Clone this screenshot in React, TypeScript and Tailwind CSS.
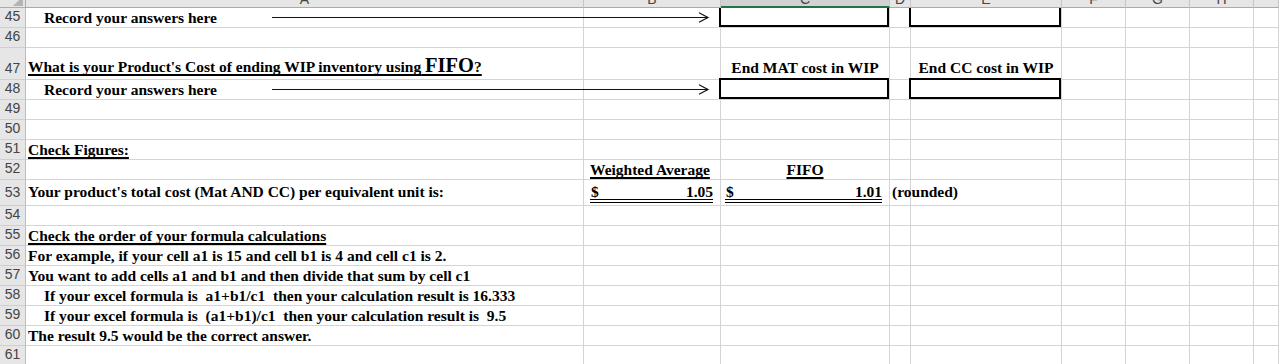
import React from "react";

type Cell = { c?: React.ReactNode; cls?: string; box?: "full" | "open" };

const W = [
  "w-[26px]",
  "w-[558px]",
  "w-[137px]",
  "w-[169px]",
  "w-[21px]",
  "w-[151px]",
  "w-[64px]",
  "w-[64px]",
  "w-[64px]",
  "w-[25px]",
];

const U =
  "underline decoration-2 underline-offset-[2px] [text-decoration-skip-ink:none]";

function Arrow() {
  return (
    <svg
      className="absolute left-[270px] top-0"
      width="442"
      height="20"
      viewBox="0 0 442 20"
    >
      <line x1="2" y1="9.5" x2="438" y2="9.5" stroke="#111" strokeWidth="1.2" />
      <polyline
        points="429,4.8 438,9.5 429,14.2"
        fill="none"
        stroke="#111"
        strokeWidth="1.2"
      />
    </svg>
  );
}

function Row({
  n,
  h,
  numPb = "pb-[3px]",
  cells = [],
  arrow = false,
}: {
  n: number;
  h: string;
  numPb?: string;
  cells?: Cell[];
  arrow?: boolean;
}) {
  const all: Cell[] = Array.from({ length: 9 }, (_, i) => cells[i] ?? {});
  return (
    <div className={`relative flex ${h}`}>
      <div
        className={`${W[0]} shrink-0 flex items-end justify-center bg-[#e6e6e6] border-r border-b border-r-[#bdbdbd] border-b-[#cfcfcf] ${numPb} font-['Liberation_Sans',sans-serif] font-normal text-[14px] leading-[16px] text-[#444]`}
      >
        {n}
      </div>
      {all.map((cell, i) => (
        <div
          key={i}
          className={`${W[i + 1]} shrink-0 relative flex items-end whitespace-pre border-r border-b border-[#d4d4d4] ${cell.cls ?? ""}`}
        >
          {cell.c}
          {cell.box === "full" && (
            <div className="absolute -left-[2px] right-0 -top-[2px] bottom-0 border-2 border-black" />
          )}
          {cell.box === "open" && (
            <div className="absolute -left-[2px] right-0 top-0 bottom-0 border-l-2 border-r-2 border-b-2 border-black" />
          )}
        </div>
      ))}
      {arrow && <Arrow />}
    </div>
  );
}

function DoubleAmount({ v, cls }: { v: string; cls: string }) {
  return (
    <div className={`flex w-full flex-col pb-[2px] ${cls}`}>
      <div className="flex justify-between leading-[14px]">
        <span className="pl-[1px]">$</span>
        <span>{v}</span>
      </div>
      <div className="h-[4px] border-y border-black" />
    </div>
  );
}

const letters = ["A", "B", "C", "D", "E", "F", "G", "H", ""];

export default function App() {
  return (
    <div className="w-[1279px] h-[364px] overflow-hidden bg-white font-['Liberation_Serif',serif] font-bold text-[15.5px] leading-[18px] text-black">
      {/* column header */}
      <div className="flex h-[8px]">
        <div className={`${W[0]} shrink-0 relative overflow-hidden bg-[#e6e6e6] border-r border-b border-[#ababab]`}>
          <svg className="absolute left-0 top-0" width="25" height="7" viewBox="0 0 25 7">
            <polygon points="23,-4 23,6 13,6" fill="#b4b4b4" />
          </svg>
        </div>
        {letters.map((l, i) => (
          <div
            key={i}
            className={`${W[i + 1]} shrink-0 flex justify-center items-end overflow-hidden border-r border-r-[#c6c6c6] ${
              l === "C"
                ? "bg-[#d2d2d2] border-b-2 border-b-[#217346]"
                : "bg-[#e6e6e6] border-b border-b-[#ababab]"
            }`}
          >
            <span
              className={`font-['Liberation_Sans',sans-serif] font-normal text-[14px] leading-[14px] text-[#444] ${
                l === "C" ? "" : "mb-[1px]"
              }`}
            >
              {l}
            </span>
          </div>
        ))}
      </div>

      <Row
        n={45}
        h="h-[20px]"
        arrow
        cells={[
          { c: "Record your answers here", cls: "pl-[18px]" },
          {},
          { box: "open" },
          {},
          { box: "open" },
        ]}
      />
      <Row n={46} h="h-[20px]" />
      <Row
        n={47}
        h="h-[32px]"
        cells={[
          {
            c: (
              <span className={U}>
                What is your Product's Cost of ending WIP inventory using{" "}
                <span className="text-[20.5px]">FIFO</span>?
              </span>
            ),
            cls: "pl-[2px] pb-[3px]",
          },
          {},
          { c: "End MAT cost in WIP", cls: "justify-center pb-[2px]" },
          {},
          { c: "End CC cost in WIP", cls: "justify-center pb-[2px]" },
        ]}
      />
      <Row
        n={48}
        h="h-[20px]"
        arrow
        cells={[
          { c: "Record your answers here", cls: "pl-[18px]" },
          {},
          { box: "full" },
          {},
          { box: "full" },
        ]}
      />
      <Row n={49} h="h-[20px]" />
      <Row n={50} h="h-[20px]" />
      <Row
        n={51}
        h="h-[20px]"
        cells={[{ c: <span className={U}>Check Figures:</span>, cls: "pl-[2px]" }]}
      />
      <Row
        n={52}
        h="h-[20px]"
        cells={[
          {},
          { c: <span className={U}>Weighted Average</span>, cls: "pl-[6px]" },
          { c: <span className={U}>FIFO</span>, cls: "justify-center" },
        ]}
      />
      <Row
        n={53}
        h="h-[26px]"
        numPb="pb-[5px]"
        cells={[
          {
            c: "Your product's total cost (Mat AND CC) per equivalent unit is:",
            cls: "pl-[2px] pb-[4px]",
          },
          { c: <DoubleAmount v="1.05" cls="ml-[6px] mr-[7px]" /> },
          { c: <DoubleAmount v="1.01" cls="ml-[4px] mr-[7px]" /> },
          { c: "(rounded)", cls: "pl-[2px] pb-[4px]" },
        ]}
      />
      <Row n={54} h="h-[20px]" />
      <Row
        n={55}
        h="h-[20px]"
        cells={[
          {
            c: <span className={U}>Check the order of your formula calculations</span>,
            cls: "pl-[2px]",
          },
        ]}
      />
      <Row
        n={56}
        h="h-[20px]"
        cells={[
          {
            c: "For example, if your cell a1 is 15 and cell b1 is 4 and cell c1 is 2.",
            cls: "pl-[2px]",
          },
        ]}
      />
      <Row
        n={57}
        h="h-[20px]"
        cells={[
          {
            c: "You want to add cells a1 and b1 and then divide that sum by cell c1",
            cls: "pl-[2px]",
          },
        ]}
      />
      <Row
        n={58}
        h="h-[20px]"
        cells={[
          {
            c: "If your excel formula is  a1+b1/c1  then your calculation result is 16.333",
            cls: "pl-[18px]",
          },
        ]}
      />
      <Row
        n={59}
        h="h-[20px]"
        cells={[
          {
            c: "If your excel formula is  (a1+b1)/c1  then your calculation result is  9.5",
            cls: "pl-[18px]",
          },
        ]}
      />
      <Row
        n={60}
        h="h-[20px]"
        cells={[
          { c: "The result 9.5 would be the correct answer.", cls: "pl-[2px]" },
        ]}
      />
      <Row n={61} h="h-[20px]" />
    </div>
  );
}
